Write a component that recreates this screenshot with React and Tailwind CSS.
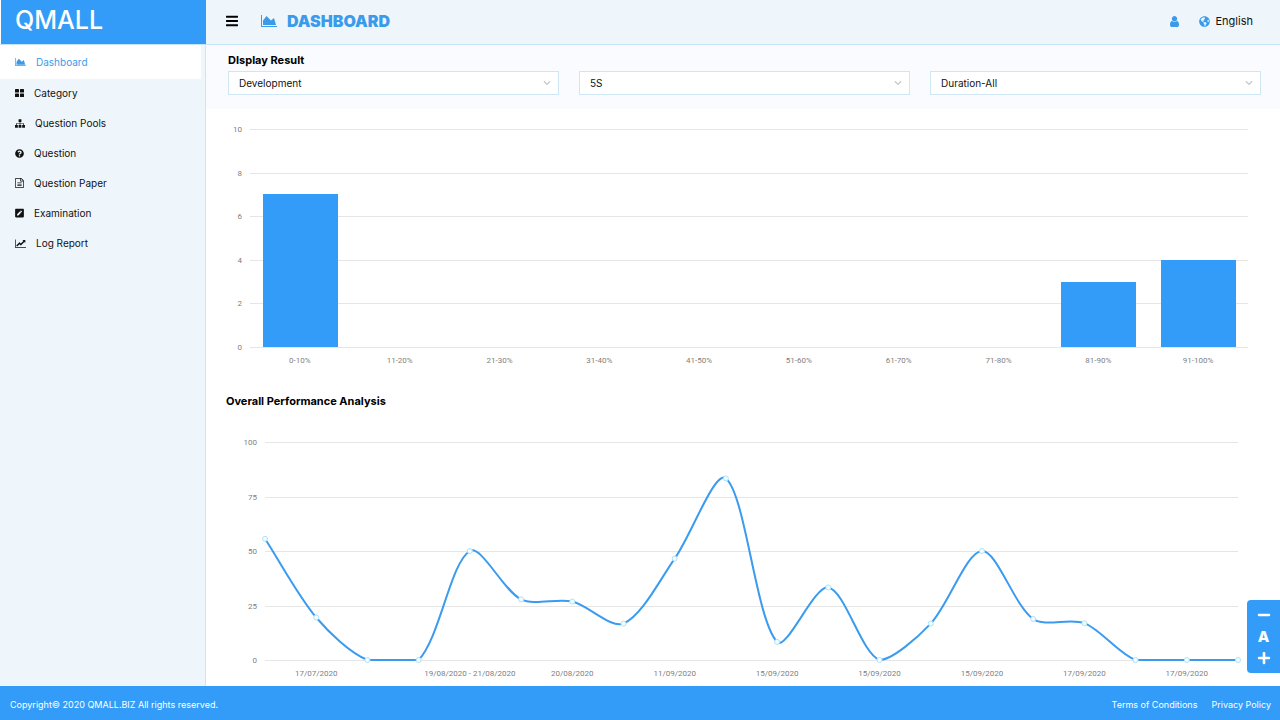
import { useEffect, useRef, useState } from "react";
import { FaBars, FaChevronDown, FaGlobeAmericas, FaMinus, FaPenSquare, FaPlus, FaQuestionCircle } from "react-icons/fa";

const AreaChartIcon = ({ className }) => (
  <svg viewBox="0 128 2048 1536" fill="currentColor" className={className} aria-hidden="true">
    <path d="M2048 1536v128H0V128h128v1408h1920zm-384-1024l256 896H256V832l448-576 576 576z" />
  </svg>
);

const LineChartIcon = ({ className }) => (
  <svg viewBox="0 128 2048 1536" fill="currentColor" className={className} aria-hidden="true">
    <path d="M2048 1536v128H0V128h128v1408h1920zM1920 288v435q0 21-19.5 29.5T1865 745l-121-121-633 633q-10 10-23 10t-23-10l-233-233-416 416-192-192 585-585q10-10 23-10t23 10l233 233 464-464-121-121q-16-16-7.5-35.5T1453 256h435q14 0 23 9t9 23z" />
  </svg>
);

const GridIcon = ({ className }) => (
  <svg viewBox="0 0 18 16" fill="currentColor" className={className} aria-hidden="true">
    <rect x="0" y="0" width="8" height="7" rx="1.2" />
    <rect x="10" y="0" width="8" height="7" rx="1.2" />
    <rect x="0" y="9" width="8" height="7" rx="1.2" />
    <rect x="10" y="9" width="8" height="7" rx="1.2" />
  </svg>
);

const SitemapIcon = ({ className }) => (
  <svg viewBox="0 128 1792 1536" fill="currentColor" className={className} aria-hidden="true">
    <path d="M1792 1248v320q0 40-28 68t-68 28h-320q-40 0-68-28t-28-68v-320q0-40 28-68t68-28h96V960H960v192h96q40 0 68 28t28 68v320q0 40-28 68t-68 28H736q-40 0-68-28t-28-68v-320q0-40 28-68t68-28h96V960H320v192h96q40 0 68 28t28 68v320q0 40-28 68t-68 28H96q-40 0-68-28t-28-68v-320q0-40 28-68t68-28h96V960q0-52 38-90t90-38h512V640h-96q-40 0-68-28t-28-68V224q0-40 28-68t68-28h320q40 0 68 28t28 68v320q0 40-28 68t-68 28h-96v192h512q52 0 90 38t38 90v192h96q40 0 68 28t28 68z" />
  </svg>
);

const FileTextIcon = ({ className }) => (
  <svg viewBox="128 0 1536 1792" fill="currentColor" className={className} aria-hidden="true">
    <path d="M1596 380q28 28 48 76t20 88v1152q0 40-28 68t-68 28H224q-40 0-68-28t-28-68V96q0-40 28-68t68-28h896q40 0 88 20t76 48zm-444-244v376h376q-10-29-22-41l-313-313q-12-12-41-22zm384 1528V640h-416q-40 0-68-28t-28-68V128H256v1536h1280zM512 832q0-14 9-23t23-9h704q14 0 23 9t9 23v64q0 14-9 23t-23 9H544q-14 0-23-9t-9-23v-64zm736 224q14 0 23 9t9 23v64q0 14-9 23t-23 9H544q-14 0-23-9t-9-23v-64q0-14 9-23t23-9h704zm0 256q14 0 23 9t9 23v64q0 14-9 23t-23 9H544q-14 0-23-9t-9-23v-64q0-14 9-23t23-9h704z" />
  </svg>
);

const UserIcon = ({ className }) => (
  <svg viewBox="256 128 1280 1536" fill="currentColor" className={className} aria-hidden="true">
    <path d="M1536 1399q0 109-62.5 187t-150.5 78H469q-88 0-150.5-78T256 1399q0-85 8.5-160.5t31.5-152 58.5-131 94-89T583 832q131 128 313 128t313-128q76 0 134.5 34.5t94 89 58.5 131 31.5 152 8.5 160.5zm-256-887q0 159-112.5 271.5T896 896 624.5 783.5 512 512t112.5-271.5T896 128t271.5 112.5T1280 512z" />
  </svg>
);

const menuItems = [
  { label: "Dashboard", icon: AreaChartIcon, size: "w-[11px] h-2", active: true },
  { label: "Category", icon: GridIcon, size: "w-[9px] h-2" },
  { label: "Question Pools", icon: SitemapIcon, size: "w-2.5 h-[9px]" },
  { label: "Question", icon: FaQuestionCircle, size: "w-[9px] h-[9px]" },
  { label: "Question Paper", icon: FileTextIcon, size: "w-[9px] h-2.5" },
  { label: "Examination", icon: FaPenSquare, size: "w-[9px] h-2.5" },
  { label: "Log Report", icon: LineChartIcon, size: "w-[11px] h-[9px]" },
];

const filters = [
  { id: "department", label: "Department", value: "Development" },
  { id: "topic", label: "Topic", value: "5S" },
  { id: "duration", label: "Duration", value: "Duration-All" },
];

const scoreRanges = [
  { range: "0-10%", count: 7 },
  { range: "11-20%", count: 0 },
  { range: "21-30%", count: 0 },
  { range: "31-40%", count: 0 },
  { range: "41-50%", count: 0 },
  { range: "51-60%", count: 0 },
  { range: "61-70%", count: 0 },
  { range: "71-80%", count: 0 },
  { range: "81-90%", count: 3 },
  { range: "91-100%", count: 4 },
];

const performance = [
  { value: 55.6 },
  { value: 19.5, date: "17/07/2020" },
  { value: 0 },
  { value: 0 },
  { value: 50, date: "19/08/2020 - 21/08/2020" },
  { value: 27.8 },
  { value: 26.8, date: "20/08/2020" },
  { value: 16.7 },
  { value: 46.5, date: "11/09/2020" },
  { value: 83.3 },
  { value: 8.3, date: "15/09/2020" },
  { value: 33.3 },
  { value: 0, date: "15/09/2020" },
  { value: 16.7 },
  { value: 50, date: "15/09/2020" },
  { value: 18.8 },
  { value: 16.9, date: "17/09/2020" },
  { value: 0 },
  { value: 0, date: "17/09/2020" },
  { value: 0 },
];

const useWidth = () => {
  const ref = useRef(null);
  const [width, setWidth] = useState(1074);

  useEffect(() => {
    const observer = new ResizeObserver(([entry]) => setWidth(entry.contentRect.width));
    observer.observe(ref.current);
    return () => observer.disconnect();
  }, []);

  return [ref, width];
};

const smoothPath = (points, top, bottom) => {
  const tension = 0.3;
  const clamp = (y) => Math.min(bottom, Math.max(top, y));

  const controls = points.map((p, i) => {
    const prev = points[i - 1] || p;
    const next = points[i + 1] || p;
    const before = Math.hypot(p.x - prev.x, p.y - prev.y);
    const after = Math.hypot(next.x - p.x, next.y - p.y);
    const a = (tension * before) / (before + after);
    const b = (tension * after) / (before + after);
    const dx = next.x - prev.x;
    const dy = next.y - prev.y;
    return {
      inX: p.x - a * dx,
      inY: clamp(p.y - a * dy),
      outX: p.x + b * dx,
      outY: clamp(p.y + b * dy),
    };
  });

  return points
    .map((p, i) => {
      if (i === 0) return `M${p.x} ${p.y}`;
      const from = controls[i - 1];
      const to = controls[i];
      return `C${from.outX} ${from.outY} ${to.inX} ${to.inY} ${p.x} ${p.y}`;
    })
    .join("");
};

const GridLines = ({ ticks, yOf, left, right }) =>
  ticks.map((tick) => (
    <g key={tick}>
      <line x1={left} x2={right} y1={yOf(tick)} y2={yOf(tick)} stroke="#e6e6e6" />
      <text x={left - 8} y={yOf(tick) + 2} textAnchor="end">{tick}</text>
    </g>
  ));

const BarChart = () => {
  const [ref, width] = useWidth();
  const left = 44;
  const right = width - 32;
  const step = (right - left) / scoreRanges.length;
  const yOf = (value) => Math.round(238 - value * 21.8) + 0.5;

  return (
    <div ref={ref}>
      <svg width="100%" height="276" className="block fill-[#808080] font-[Roboto,sans-serif] text-[8px]" role="img" aria-label="Results by score range">
        <GridLines ticks={[0, 2, 4, 6, 8, 10]} yOf={yOf} left={left} right={right} />
        {scoreRanges.map(({ range, count }, i) => (
          <g key={range}>
            <rect
              x={Math.ceil(left + step * i + step / 8)}
              y={yOf(count) - 0.5}
              width={Math.round(step * 0.75)}
              height={yOf(0) - yOf(count)}
              fill="#339cf9"
            />
            <text x={left + step * (i + 0.5)} y="254" textAnchor="middle">{range}</text>
          </g>
        ))}
      </svg>
    </div>
  );
};

const LineChart = () => {
  const [ref, width] = useWidth();
  const left = 59;
  const right = width - 42;
  const step = (right - left) / (performance.length - 1);
  const yOf = (value) => 251 - value * 2.18;
  const points = performance.map(({ value }, i) => ({ x: left + step * i, y: yOf(value) }));

  return (
    <div ref={ref}>
      <svg width="100%" height="275" className="block fill-[#808080] font-[Roboto,sans-serif] text-[8px]" role="img" aria-label="Overall performance by date">
        <GridLines ticks={[0, 25, 50, 75, 100]} yOf={(value) => Math.round(yOf(value)) + 0.5} left={left} right={right} />
        <path d={smoothPath(points, 33, 251)} fill="none" stroke="#3b9bee" strokeWidth="2" />
        {points.map((p) => (
          <circle key={p.x} cx={p.x} cy={p.y} r="2.5" fill="#f4fdff" stroke="#aee3f8" />
        ))}
        {performance.map(({ date }, i) => date && (
          <text key={i} x={points[i].x} y="267" textAnchor="middle">{date}</text>
        ))}
      </svg>
    </div>
  );
};

const Sidebar = () => (
  <nav className="w-[206px] shrink-0 bg-[#eef6fc] border-r border-[#cde6f6]">
    <ul>
      {menuItems.map(({ label, icon: Icon, size, active }) => (
        <li key={label}>
          <a
            href="#"
            className={
              active
                ? "flex items-center gap-2.5 h-[34px] pl-[15px] mr-1 bg-white text-[#3b9bea]"
                : "flex items-center gap-2.5 h-[30px] pb-0.5 pl-[15px] text-[#111]"
            }
          >
            <Icon className={`${size} shrink-0`} />
            <span>{label}</span>
          </a>
        </li>
      ))}
    </ul>
  </nav>
);

const Header = () => (
  <header className="flex h-[45px] bg-[#eef6fc] border-b border-[#c5e4f8]">
    <a href="#" className="w-[206px] shrink-0 bg-[#339cf9] border-l border-white pl-3.5 text-white text-[25px] leading-10 font-medium">
      QMALL
    </a>
    <div className="flex flex-1 items-center pl-5 pr-[27px] pb-0.5">
      <button type="button" aria-label="Toggle menu" className="text-black">
        <FaBars className="w-3 h-3.5" />
      </button>
      <h1 className="flex items-center gap-2.5 ml-[23px] text-[#3b9bea] text-base leading-5 font-black">
        <AreaChartIcon className="w-4 h-3" />
        DASHBOARD
      </h1>
      <div className="flex items-center ml-auto">
        <button type="button" aria-label="Account" className="text-[#3b9bea]">
          <UserIcon className="w-[9px] h-[11px]" />
        </button>
        <button type="button" className="flex items-center gap-1.5 ml-5 text-[#111] text-[11px]">
          <FaGlobeAmericas className="size-[11px] text-[#3b9bea]" />
          English
        </button>
      </div>
    </div>
  </header>
);

const Filters = () => (
  <section className="bg-[#fafbfe] h-16 pt-2 pl-[22px] pr-[19px]">
    <h2 className="text-[11px] leading-[14px] font-bold text-black">DIsplay Result</h2>
    <div className="flex gap-5 mt-1">
      {filters.map(({ id, label, value }) => (
        <div key={id} className="relative flex-1">
          <select
            id={id}
            aria-label={label}
            className="block w-full h-6 px-2.5 appearance-none bg-white border border-[#cfe6f4] text-[#111]"
          >
            <option>{value}</option>
          </select>
          <FaChevronDown className="absolute right-2 top-2 size-2 text-[#c4c9cd] pointer-events-none" />
        </div>
      ))}
    </div>
  </section>
);

const FontSizer = () => (
  <div className="fixed right-0 bottom-[47px] flex flex-col items-center justify-between w-[33px] h-[73px] py-2 rounded-l bg-[#339cf9] text-white">
    <button type="button" aria-label="Decrease text size">
      <FaMinus className="size-3.5" />
    </button>
    <button type="button" aria-label="Reset text size" className="text-[15px] leading-4 font-extrabold">
      A
    </button>
    <button type="button" aria-label="Increase text size">
      <FaPlus className="size-3.5" />
    </button>
  </div>
);

const Footer = () => (
  <footer className="flex items-center justify-between h-[34px] pl-2.5 pr-[9px] pt-1 bg-[#339cf9] text-white text-[9px]">
    <p>Copyright© 2020 QMALL.BIZ All rights reserved.</p>
    <div className="flex gap-3.5">
      <a href="#">Terms of Conditions</a>
      <a href="#">Privacy Policy</a>
    </div>
  </footer>
);

const App = () => (
  <div className="flex flex-col min-h-screen bg-white font-['Inter',sans-serif] text-[10px]">
    <Header />
    <div className="flex flex-1">
      <Sidebar />
      <main className="flex-1 min-w-0">
        <Filters />
        <BarChart />
        <section className="pt-2">
          <h2 className="pl-5 text-[11px] leading-4 font-bold text-black">Overall Performance Analysis</h2>
          <LineChart />
        </section>
      </main>
    </div>
    <Footer />
    <FontSizer />
  </div>
);

export default App;
